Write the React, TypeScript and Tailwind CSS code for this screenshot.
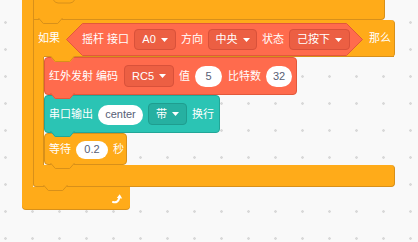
import React from "react";

const O = "#FFAB19";
const OD = "#D8901A";
const R = "#FF6B4D";
const RD = "#E2583C";
const T = "#2BC4B4";
const TD = "#22A697";

function Tab({ fill, stroke, className }: { fill: string; stroke: string; className: string }) {
  return (
    <svg className={"pointer-events-none absolute z-10 " + className} width="25" height="7" viewBox="0 0 25 7">
      <path d="M0 0 L5 6 L20 6 L25 0 Z" fill={fill} />
      <path d="M0.5 0 L5.3 5.5 L19.7 5.5 L24.5 0" fill="none" stroke={stroke} strokeWidth="1" />
    </svg>
  );
}

function Caret() {
  return (
    <svg width="7" height="4" viewBox="0 0 7 4">
      <path d="M0 0 L7 0 L3.5 4 Z" fill="#ffffff" />
    </svg>
  );
}

function RedDrop({ label, className }: { label: string; className: string }) {
  return (
    <div className={"flex h-[21px] items-center justify-center gap-[5px] rounded-[4px] border border-[#D9513A] bg-[#EC5F43] text-white " + className}>
      <span>{label}</span>
      <Caret />
    </div>
  );
}

function Oval({ label, className }: { label: string; className: string }) {
  return (
    <div className={"flex items-center justify-center rounded-full bg-white text-[#575E75] " + className}>
      {label}
    </div>
  );
}

export default function App() {
  return (
    <div className="h-[242px] w-[418px] overflow-hidden bg-[#F9F9F9] bg-[radial-gradient(circle,#d9d9d9_1px,transparent_1.6px)] bg-[length:27px_27px] bg-[position:-8px_9px] font-['Liberation_Sans','Noto_Sans_CJK_SC',sans-serif] text-[11px] leading-none text-white">
      {/* forever block */}
      <div className="ml-[22px] flex flex-col items-start">
        <div className="flex">
          <div className="w-[11px] bg-[#FFAB19]" />
          <div className="flex flex-col items-start">
            {/* top block (cut off) */}
            <div className="relative h-[20px] w-[352px] rounded-br-[4px] border-b border-l border-r border-[#D8901A] bg-[#FFAB19]">
              <svg className="absolute left-[19px] top-0" width="22" height="4" viewBox="0 0 22 4">
                <path d="M0.5 0 Q2 3 5 3 L17 3 Q20 3 21.5 0" fill="none" stroke={OD} strokeWidth="1" />
              </svg>
              <Tab fill={O} stroke={OD} className="left-[4px] top-[calc(100%-1px)]" />
            </div>

            {/* if block */}
            <div className="flex flex-col items-start">
              <div className="relative flex h-[37px] w-[362px] items-center rounded-r-[4px] border-l border-r border-[#D8901A] bg-[#FFAB19] pl-[4px]">
                <span>如果</span>
                {/* hexagon boolean */}
                <div className="relative ml-[6px] mt-[2px] flex h-[33px] w-[297px] items-center gap-[5px] pl-[16px]">
                  <svg className="absolute left-0 top-0" width="297" height="33" viewBox="0 0 297 33">
                    <path d="M0.5 16.5 L16.5 0.5 L280.5 0.5 L296.5 16.5 L280.5 32.5 L16.5 32.5 Z" fill={R} stroke={RD} strokeWidth="1" />
                  </svg>
                  <span className="relative">摇杆 接口</span>
                  <RedDrop label="A0" className="relative w-[42px]" />
                  <span className="relative">方向</span>
                  <RedDrop label="中央" className="relative w-[49px]" />
                  <span className="relative">状态</span>
                  <RedDrop label="己按下" className="relative w-[61px]" />
                </div>
                <span className="ml-[6px]">那么</span>
                <div className="absolute bottom-0 left-[10px] right-0 h-px bg-[#D8901A]" />
                <Tab fill={O} stroke={OD} className="left-[16px] top-[calc(100%-1px)]" />
              </div>

              <div className="flex">
                <div className="w-[11px] border-l border-r border-[#D8901A] bg-[#FFAB19]" />
                <div className="flex flex-col items-start">
                  {/* IR block */}
                  <div className="relative flex h-[38px] w-[253px] items-center gap-[5px] rounded-[4px] border border-[#E2583C] bg-[#FF6B4D] pl-[4px]">
                    <span className="mr-[1px]">红外发射 编码</span>
                    <RedDrop label="RC5" className="h-[22px] w-[50px]" />
                    <span>值</span>
                    <Oval label="5" className="h-[21px] w-[27px]" />
                    <span className="ml-[1px]">比特数</span>
                    <Oval label="32" className="h-[21px] w-[26px]" />
                    <Tab fill={R} stroke={RD} className="left-[5px] top-[calc(100%-1px)]" />
                  </div>
                  {/* teal block */}
                  <div className="relative flex h-[38px] w-[176px] items-center gap-[5px] rounded-[4px] border border-[#22A697] bg-[#2BC4B4] pl-[4px]">
                    <span>串口输出</span>
                    <Oval label="center" className="mt-[1px] h-[20px] w-[45px]" />
                    <div className="flex h-[22px] w-[39px] items-center justify-center gap-[5px] rounded-[4px] border border-[#1F9D8F] bg-[#26B0A1]">
                      <span>带</span>
                      <Caret />
                    </div>
                    <span>换行</span>
                    <Tab fill={T} stroke={TD} className="left-[5px] top-[calc(100%-1px)]" />
                  </div>
                  {/* wait block */}
                  <div className="relative flex h-[32px] w-[83px] items-center gap-[5px] rounded-[4px] border border-[#D8901A] bg-[#FFAB19] pl-[4px]">
                    <span>等待</span>
                    <Oval label="0.2" className="mt-[1px] h-[18px] w-[32px]" />
                    <span>秒</span>
                    <Tab fill={O} stroke={OD} className="left-[5px] top-[calc(100%-1px)]" />
                  </div>
                </div>
              </div>

              <div className="relative h-[22px] w-[362px] rounded-r-[4px] rounded-bl-[3px] border-b border-l border-r border-[#D8901A] bg-[#FFAB19]">
                <Tab fill={O} stroke={OD} className="left-[9px] top-[calc(100%-1px)]" />
              </div>
            </div>
          </div>
        </div>
        {/* forever bottom */}
        <div className="flex h-[22px] w-[108px] items-center justify-end rounded-b-[4px] bg-[#FFAB19] pr-[7px] shadow-[0_1px_0_#D8901A]">
          <svg width="11" height="11" viewBox="0 0 11 11">
            <path d="M1 9 Q6 10.5 7.5 4.5" fill="none" stroke="#ffffff" strokeWidth="2" strokeLinecap="round" />
            <path d="M4.8 5 L7.7 1.2 L10.2 5.5 Z" fill="#ffffff" />
          </svg>
        </div>
      </div>
    </div>
  );
}
